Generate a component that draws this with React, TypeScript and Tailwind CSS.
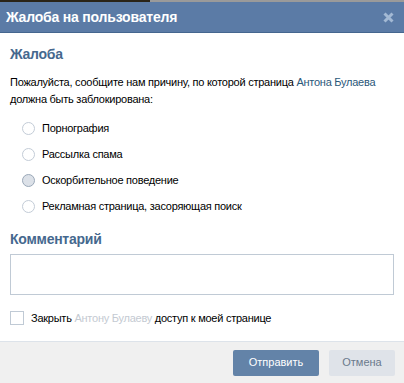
export default function App() {
  const reasons = [
    "Порнография",
    "Рассылка спама",
    "Оскорбительное поведение",
    "Рекламная страница, засоряющая поиск",
  ];
  return (
    <div className="w-[404px] h-[383px] flex flex-col bg-white text-[11px] text-black overflow-hidden" style={{ fontFamily: "Tahoma, 'Liberation Sans', sans-serif" }}>
      <div className="h-[2px] flex shrink-0">
        <div className="w-[150px] bg-[#2a2418]" />
        <div className="flex-1 bg-[#9a9a9a]" />
      </div>
      <div className="h-[31px] shrink-0 bg-[#5b7ba6] border-b border-[#45668f] flex items-center justify-between pl-[6px] pr-[10px]">
        <span className="text-white font-bold text-[14px] tracking-[-0.2px]">Жалоба на пользователя</span>
        <svg width="11" height="11" viewBox="0 0 11 11">
          <path d="M1.5 1.5 L9.5 9.5 M9.5 1.5 L1.5 9.5" stroke="#a3b9d4" strokeWidth="3" />
        </svg>
      </div>
      <div className="flex-1 flex flex-col px-[10px] pt-[13px] tracking-[-0.25px]">
        <div className="text-[#45688e] font-bold text-[14px] leading-[16px]">Жалоба</div>
        <p className="mt-[12px] leading-[17px]">
          Пожалуйста, сообщите нам причину, по которой страница{" "}
          <span className="text-[#2b587a]">Антона Булаева</span> должна быть заблокирована:
        </p>
        <div className="mt-[13px] flex flex-col gap-[12px] pl-[12px]">
          {reasons.map((r, i) => (
            <label key={r} className="flex items-center gap-[7px] h-[14px]">
              <span
                className={
                  "w-[13px] h-[13px] rounded-full border " +
                  (i === 2 ? "border-[#9aa8b8] bg-[#dce1e8]" : "border-[#c3ccd7] bg-white")
                }
              />
              <span>{r}</span>
            </label>
          ))}
        </div>
        <div className="mt-[18px] text-[#45688e] font-bold text-[14px] leading-[16px]">Комментарий</div>
        <div className="mt-[7px] h-[41px] border border-[#c0cad5] bg-white" />
        <label className="mt-[15px] flex items-center gap-[7px]">
          <span className="w-[14px] h-[14px] border border-[#c0cad5] bg-white" />
          <span>
            Закрыть <span className="text-[#c4cad2]">Антону Булаеву</span> доступ к моей странице
          </span>
        </label>
      </div>
      <div className="h-[42px] shrink-0 bg-[#f0f0f0] border-t border-[#dde3ea] flex items-center justify-end gap-[10px] pr-[9px]">
        <button className="w-[86px] h-[26px] rounded-[2px] bg-[#6383a8] text-white">Отправить</button>
        <button className="w-[66px] h-[26px] rounded-[2px] bg-[#dfe3e9] text-[#6b7a8c]">Отмена</button>
      </div>
    </div>
  );
}
